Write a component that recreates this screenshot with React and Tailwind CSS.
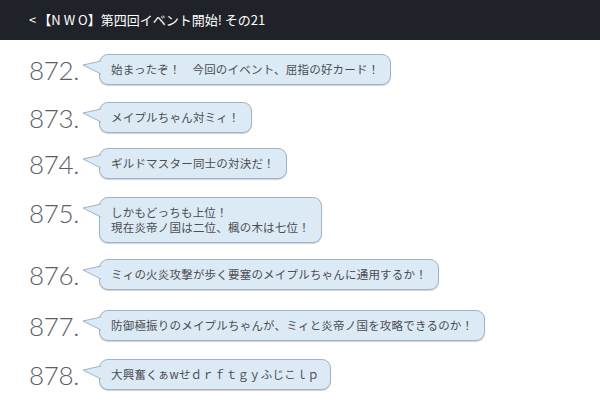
import React from 'react';

const posts = [
  { no: 872, lines: ['始まったぞ！　今回のイベント、屈指の好カード！'], mt: 'mt-[14px]' },
  { no: 873, lines: ['メイプルちゃん対ミィ！'], mt: 'mt-[17px]' },
  { no: 874, lines: ['ギルドマスター同士の対決だ！'], mt: 'mt-[15px]' },
  { no: 875, lines: ['しかもどっちも上位！', '現在炎帝ノ国は二位、楓の木は七位！'], mt: 'mt-[18px]' },
  { no: 876, lines: ['ミィの火炎攻撃が歩く要塞のメイプルちゃんに通用するか！'], mt: 'mt-[16px]' },
  { no: 877, lines: ['防御極振りのメイプルちゃんが、ミィと炎帝ノ国を攻略できるのか！'], mt: 'mt-[20px]' },
  { no: 878, lines: ['大興奮くぁwせｄｒｆｔｇｙふじこｌｐ'], mt: 'mt-[18px]' },
];

const Tail = () => (
  <svg className="absolute left-[-18px] top-[4px]" width="20" height="18" viewBox="0 0 20 18">
    <path d="M19 2 L1 6 Q11 11 19 15" fill="#dceaf5" stroke="#9fb4c6" strokeWidth="1" />
  </svg>
);

const Post = ({ no, lines, mt }) => (
  <div className={`flex items-start ${mt}`}>
    <div className="w-[84px] shrink-0 pl-[29px] pt-[1px] text-[26px] leading-[30px] font-light text-[#5b6067] tracking-[-0.3px]" style={{ fontFamily: 'Lato, "Open Sans", sans-serif' }}>
      {no}.
    </div>
    <div className="relative ml-[15px] rounded-[9px] border border-[#9fb4c6] bg-[#dceaf5] px-[11px] py-[7px] shadow-[0_1px_1px_rgba(0,0,0,0.18)]">
      <Tail />
      {lines.map((l) => (
        <div key={l} className="text-[11.5px] leading-[15px] tracking-[0.2px] text-[#4a4d52] whitespace-nowrap">{l}</div>
      ))}
    </div>
  </div>
);

export default function App() {
  return (
    <div className="w-[600px] h-[406px] overflow-hidden bg-white" style={{ fontFamily: '"Noto Sans CJK JP", "Noto Sans", sans-serif' }}>
      <div className="h-[40px] bg-[#1f2228] flex items-center pl-[29px] text-white text-[13px]">
        <span className="mr-[2px]">&lt;</span>
        <span>【<span className="tracking-[3px]">NW</span>O】第四回イベント開始! その21</span>
      </div>
      {posts.map((p) => (
        <Post key={p.no} {...p} />
      ))}
    </div>
  );
}
